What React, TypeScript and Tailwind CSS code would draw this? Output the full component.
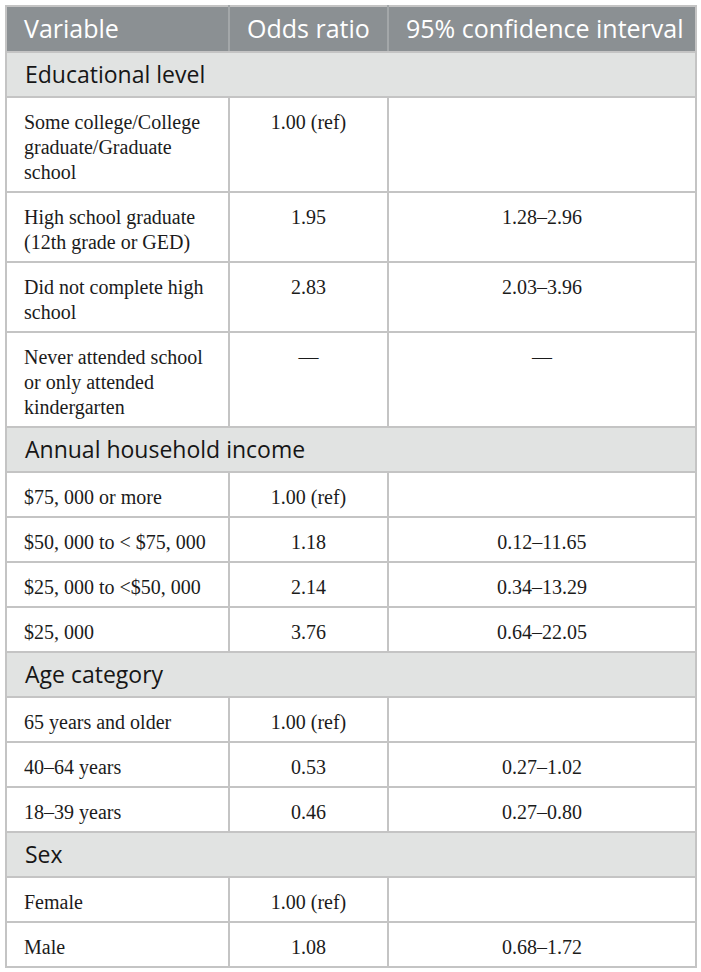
import React from 'react';

type Row = { label: string; odds: string; ci: string };
type Section = { title: string; rows: Row[] };

const sections: Section[] = [
  {
    title: 'Educational level',
    rows: [
      { label: 'Some college/College graduate/Graduate school', odds: '1.00 (ref)', ci: '' },
      { label: 'High school graduate (12th grade or GED)', odds: '1.95', ci: '1.28–2.96' },
      { label: 'Did not complete high school', odds: '2.83', ci: '2.03–3.96' },
      { label: 'Never attended school or only attended kindergarten', odds: '—', ci: '—' },
    ],
  },
  {
    title: 'Annual household income',
    rows: [
      { label: '$75, 000 or more', odds: '1.00 (ref)', ci: '' },
      { label: '$50, 000 to < $75, 000', odds: '1.18', ci: '0.12–11.65' },
      { label: '$25, 000 to <$50, 000', odds: '2.14', ci: '0.34–13.29' },
      { label: '$25, 000', odds: '3.76', ci: '0.64–22.05' },
    ],
  },
  {
    title: 'Age category',
    rows: [
      { label: '65 years and older', odds: '1.00 (ref)', ci: '' },
      { label: '40–64 years', odds: '0.53', ci: '0.27–1.02' },
      { label: '18–39 years', odds: '0.46', ci: '0.27–0.80' },
    ],
  },
  {
    title: 'Sex',
    rows: [
      { label: 'Female', odds: '1.00 (ref)', ci: '' },
      { label: 'Male', odds: '1.08', ci: '0.68–1.72' },
    ],
  },
];

const cell =
  "border-2 border-[#c4c4c4] align-top pt-[12px] pb-[6px] text-[20px] leading-[25px] text-[#1b1b1b] font-['Liberation_Serif',serif]";

export default function App() {
  return (
    <div className="min-h-screen bg-white pl-[5px] pt-[5px]">
      <table className="w-[690px] border-collapse table-fixed">
        <colgroup>
          <col className="w-[223px]" />
          <col className="w-[159px]" />
          <col className="w-[308px]" />
        </colgroup>
        {/* Header */}
        <thead>
          <tr className="h-[46px] bg-[#8b9093] text-white font-['Open_Sans',sans-serif] text-[25px]">
            <th className="border-2 border-[#c4c4c4] border-r-[#a3a7a9] px-[17px] text-left font-normal">Variable</th>
            <th className="border-2 border-[#c4c4c4] border-r-[#a3a7a9] px-[17px] text-left font-normal">Odds ratio</th>
            <th className="border-2 border-[#c4c4c4] px-[17px] text-left font-normal whitespace-nowrap">95% confidence interval</th>
          </tr>
        </thead>
        <tbody>
          {sections.map((s) => (
            <React.Fragment key={s.title}>
              <tr className="h-[45px] bg-[#e1e3e2]">
                <td
                  colSpan={3}
                  className="border-2 border-[#c4c4c4] px-[18px] text-[23px] text-[#161616] font-['Open_Sans',sans-serif]"
                >
                  {s.title}
                </td>
              </tr>
              {s.rows.map((r) => (
                <tr key={r.label}>
                  <td className={`${cell} pl-[17px] pr-[10px]`}>{r.label}</td>
                  <td className={`${cell} text-center`}>{r.odds}</td>
                  <td className={`${cell} text-center`}>{r.ci}</td>
                </tr>
              ))}
            </React.Fragment>
          ))}
        </tbody>
      </table>
    </div>
  );
}
